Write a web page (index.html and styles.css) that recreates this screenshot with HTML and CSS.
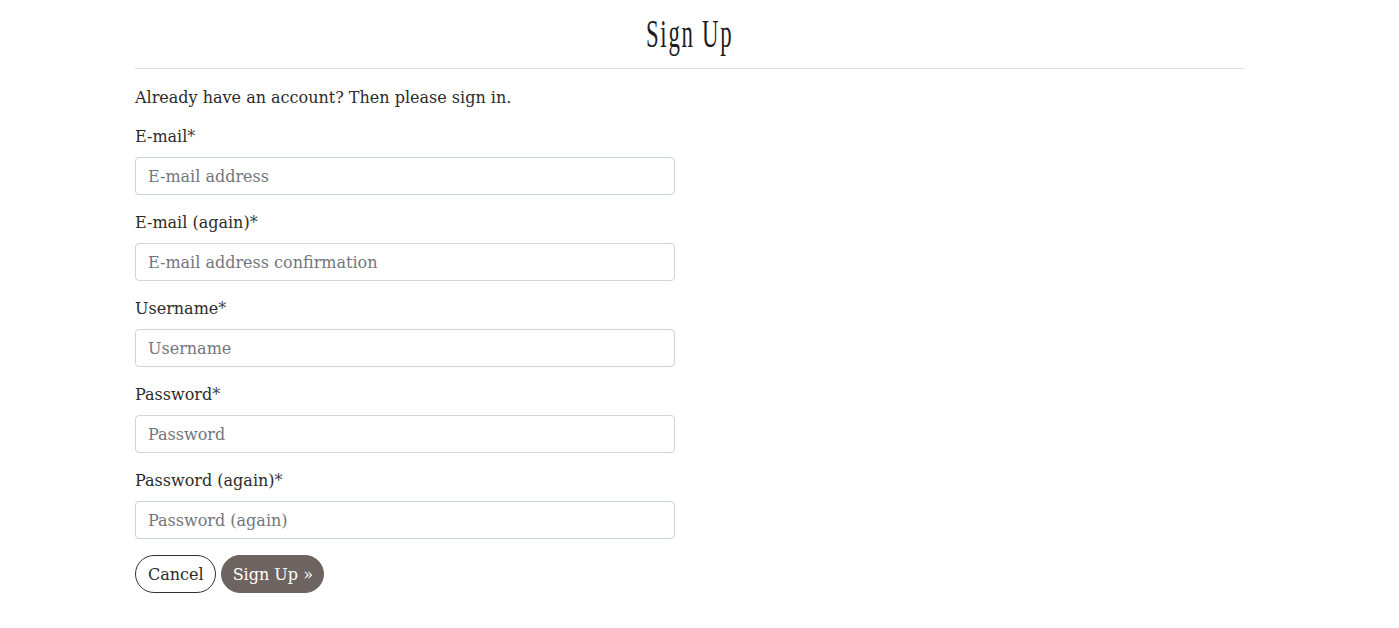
FILE: index.html
```html
<!DOCTYPE html>
<html>
<head>
<meta charset="utf-8">
<link rel="stylesheet" href="styles.css">
</head>
<body>
<div class="container">
  <div class="title-wrap"><h1 class="title">Sign Up</h1></div>
  <hr class="rule">
  <p class="intro">Already have an account? Then please <a class="link" href="#">sign in</a>.</p>
  <form class="form">
    <div class="group">
      <label class="label">E-mail<span class="req">*</span></label>
      <input class="input" type="email" placeholder="E-mail address">
    </div>
    <div class="group">
      <label class="label">E-mail (again)<span class="req">*</span></label>
      <input class="input" type="email" placeholder="E-mail address confirmation">
    </div>
    <div class="group">
      <label class="label">Username<span class="req">*</span></label>
      <input class="input" type="text" placeholder="Username">
    </div>
    <div class="group">
      <label class="label">Password<span class="req">*</span></label>
      <input class="input" type="password" placeholder="Password">
    </div>
    <div class="group">
      <label class="label">Password (again)<span class="req">*</span></label>
      <input class="input" type="password" placeholder="Password (again)">
    </div>
    <div class="actions">
      <a class="btn btn-outline" href="#">Cancel</a>
      <button class="btn btn-fill" type="button">Sign Up »</button>
    </div>
  </form>
</div>
</body>
</html>
```
FILE: styles.css
```css
* { box-sizing: border-box; }
html, body { margin: 0; padding: 0; background: #fff; }
body {
  font-family: "DejaVu Serif", serif;
  font-size: 16px;
  color: #2b2b2b;
  padding-right: 19px;
}
.container {
  width: 1110px;
  margin: 0 auto;
  padding-top: 11px;
}
.title-wrap { display: flex; justify-content: center; }
.title {
  margin: 0;
  font-family: "Liberation Serif", serif;
  font-weight: normal;
  font-size: 40px;
  line-height: 46px;
  letter-spacing: 3px;
  transform: scaleX(0.57);
  color: #1e1e1e;
}
.rule {
  margin: 11px 0 0 0;
  border: 0;
  border-top: 1px solid #e2e2e2;
}
.intro {
  margin: 17px 0 0 0;
  line-height: 24px;
}
.link { color: inherit; text-decoration: none; }
.form { width: 540px; margin-top: 15px; }
.group { display: flex; flex-direction: column; margin-bottom: 16px; }
.label { line-height: 24px; margin-bottom: 8px; color: #2b2b2b; }
.req { color: #3b3f4a; }
.input {
  height: 38px;
  border: 1px solid #ced4da;
  border-radius: 4px;
  padding: 0 12px;
  font-family: "DejaVu Serif", serif;
  font-size: 16px;
  color: #333;
}
.input::placeholder { color: #73767c; }
.actions { display: flex; gap: 5px; }
.btn {
  height: 38px;
  border-radius: 19px;
  padding: 0 11px 0 12px;
  font-family: "DejaVu Serif", serif;
  font-size: 16px;
  display: inline-flex;
  align-items: center;
  text-decoration: none;
  cursor: pointer;
}
.btn-outline {
  border: 1px solid #2f3337;
  color: #2b2b2b;
  background: #fff;
}
.btn-fill {
  border: 1px solid #6d6360;
  background: #6d6360;
  color: #fff;
  padding: 0 10px 0 11px;
}
```
